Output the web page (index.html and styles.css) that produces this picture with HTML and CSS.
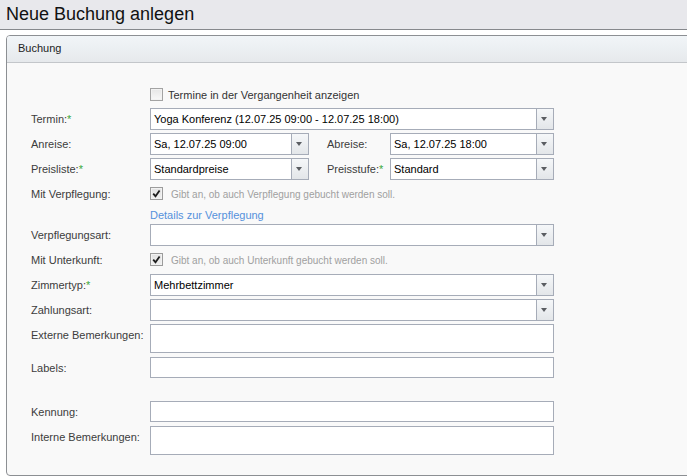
FILE: index.html
```html
<!DOCTYPE html>
<html lang="de">
<head>
<meta charset="utf-8">
<title>Neue Buchung anlegen</title>
<link rel="stylesheet" href="styles.css">
</head>
<body>
<div class="titlebar"><h1>Neue Buchung anlegen</h1></div>
<div class="gap"></div>
<div class="panel">
  <div class="panel-header">Buchung</div>
  <div class="panel-body">
    <div class="row row-check">
      <span class="lbl"></span>
      <span class="cb"></span>
      <span class="cb-text">Termine in der Vergangenheit anzeigen</span>
    </div>
    <div class="row">
      <span class="lbl">Termin:<span class="req">*</span></span>
      <div class="field w-full"><span class="val">Yoga Konferenz (12.07.25 09:00 - 12.07.25 18:00)</span><span class="trigger"></span></div>
    </div>
    <div class="row">
      <span class="lbl">Anreise:</span>
      <div class="field w-half"><span class="val">Sa, 12.07.25 09:00</span><span class="trigger"></span></div>
      <span class="lbl2">Abreise:</span>
      <div class="field w-half2"><span class="val">Sa, 12.07.25 18:00</span><span class="trigger"></span></div>
    </div>
    <div class="row">
      <span class="lbl">Preisliste:<span class="req">*</span></span>
      <div class="field w-half"><span class="val">Standardpreise</span><span class="trigger"></span></div>
      <span class="lbl2">Preisstufe:<span class="req">*</span></span>
      <div class="field w-half2"><span class="val">Standard</span><span class="trigger"></span></div>
    </div>
    <div class="row row-cbfield">
      <span class="lbl">Mit Verpflegung:</span>
      <span class="cb checked"><svg viewBox="0 0 11 11" width="11" height="11"><path d="M2.2 5.6 L4.5 8.2 L8.6 2.4" fill="none" stroke="#1e1e1e" stroke-width="1.8"/></svg></span>
      <span class="hint">Gibt an, ob auch Verpflegung gebucht werden soll.</span>
    </div>
    <div class="row row-link">
      <span class="lbl"></span>
      <a class="link" href="#">Details zur Verpflegung</a>
    </div>
    <div class="row">
      <span class="lbl">Verpflegungsart:</span>
      <div class="field w-full"><span class="val"></span><span class="trigger"></span></div>
    </div>
    <div class="row row-cbfield">
      <span class="lbl">Mit Unterkunft:</span>
      <span class="cb checked"><svg viewBox="0 0 11 11" width="11" height="11"><path d="M2.2 5.6 L4.5 8.2 L8.6 2.4" fill="none" stroke="#1e1e1e" stroke-width="1.8"/></svg></span>
      <span class="hint">Gibt an, ob auch Unterkunft gebucht werden soll.</span>
    </div>
    <div class="row">
      <span class="lbl">Zimmertyp:<span class="req">*</span></span>
      <div class="field w-full"><span class="val">Mehrbettzimmer</span><span class="trigger"></span></div>
    </div>
    <div class="row">
      <span class="lbl">Zahlungsart:</span>
      <div class="field w-full"><span class="val"></span><span class="trigger"></span></div>
    </div>
    <div class="row row-area">
      <span class="lbl">Externe Bemerkungen:</span>
      <div class="field w-full area"></div>
    </div>
    <div class="row row-labels">
      <span class="lbl">Labels:</span>
      <div class="field w-full thin"></div>
    </div>
    <div class="row">
      <span class="lbl">Kennung:</span>
      <div class="field w-full thin"></div>
    </div>
    <div class="row row-area last">
      <span class="lbl">Interne Bemerkungen:</span>
      <div class="field w-full area"></div>
    </div>
  </div>
</div>
</body>
</html>
```

FILE: styles.css
```css
html, body {
  margin: 0;
  padding: 0;
  background: #ffffff;
  overflow: hidden;
  font-family: "Liberation Sans", Arial, sans-serif;
  font-size: 11px;
  color: #333;
}

.titlebar {
  height: 29px;
  background: #e8e8ec;
  border-bottom: 1px solid #86888c;
}

.titlebar h1 {
  margin: 0;
  padding-left: 6px;
  font-size: 18px;
  font-weight: normal;
  line-height: 29px;
  color: #111;
}

.gap {
  height: 5px;
}

.panel {
  margin-left: 6px;
  margin-right: -20px;
  border: 1px solid #8c8f93;
  border-radius: 4px 0 0 4px;
  background: #f9f9f9;
  overflow: hidden;
}

.panel-header {
  height: 26px;
  line-height: 25px;
  padding-left: 11px;
  background: linear-gradient(#f1f5f8, #e6e9ec);
  border-bottom: 1px solid #c3c6ca;
  color: #222;
  font-size: 11px;
}

.panel-body {
  padding: 25px 0 20px 24px;
}

.row {
  display: flex;
  align-items: flex-start;
  margin-bottom: 3px;
}

.lbl {
  width: 119px;
  flex: none;
  line-height: 22px;
  color: #3c3c3c;
}

.lbl2 {
  width: 63px;
  margin-left: 18px;
  flex: none;
  line-height: 22px;
  color: #3c3c3c;
}

.req {
  color: #3aa83a;
}

.field {
  box-sizing: border-box;
  height: 22px;
  border: 1px solid #a6acb8;
  background: #fff;
  display: flex;
  flex: none;
}

.w-full { width: 404px; }
.w-half { width: 159px; }
.w-half2 { width: 164px; }

.field.area { height: 29px; }
.field.thin { height: 21px; }

.val {
  flex: 1;
  padding-left: 3px;
  line-height: 20px;
  color: #000;
  font-size: 11px;
  white-space: nowrap;
  overflow: hidden;
}

.trigger {
  width: 16px;
  flex: none;
  border-left: 1px solid #a6acb8;
  background: linear-gradient(#f5f7f9, #e3e6e9);
  position: relative;
}

.trigger::after {
  content: "";
  position: absolute;
  left: 4px;
  top: 8px;
  border-left: 3.5px solid transparent;
  border-right: 3.5px solid transparent;
  border-top: 4px solid #5a5d62;
}

.row-check {
  align-items: center;
  height: 13px;
  margin-bottom: 7px;
}

.cb {
  box-sizing: border-box;
  width: 13px;
  height: 13px;
  flex: none;
  border: 1px solid #a3a3a3;
  background: linear-gradient(#e6e6e6, #f8f8f8);
  box-shadow: inset 0 0 0 1px #f2f2f2;
  position: relative;
}

.cb.checked {
  border-color: #9c9c9c;
  background: linear-gradient(#e2e2e2, #f0f0f0);
}

.cb svg {
  position: absolute;
  left: 0;
  top: 0;
}

.cb-text {
  margin-left: 5px;
  color: #333;
  font-size: 11px;
}

.row-cbfield {
  height: 22px;
  align-items: center;
}

.row-cbfield .cb {
  margin-top: -1px;
}

.hint {
  margin-left: 8px;
  color: #a0a0a0;
  font-size: 10px;
}

.row-link {
  height: 13px;
  align-items: center;
}

.link {
  color: #5591dc;
  text-decoration: none;
  font-size: 11px;
}

.row-area {
  margin-bottom: 4px;
}

.row-labels {
  margin-bottom: 22px;
}

.row.last {
  margin-bottom: 0;
}
```
